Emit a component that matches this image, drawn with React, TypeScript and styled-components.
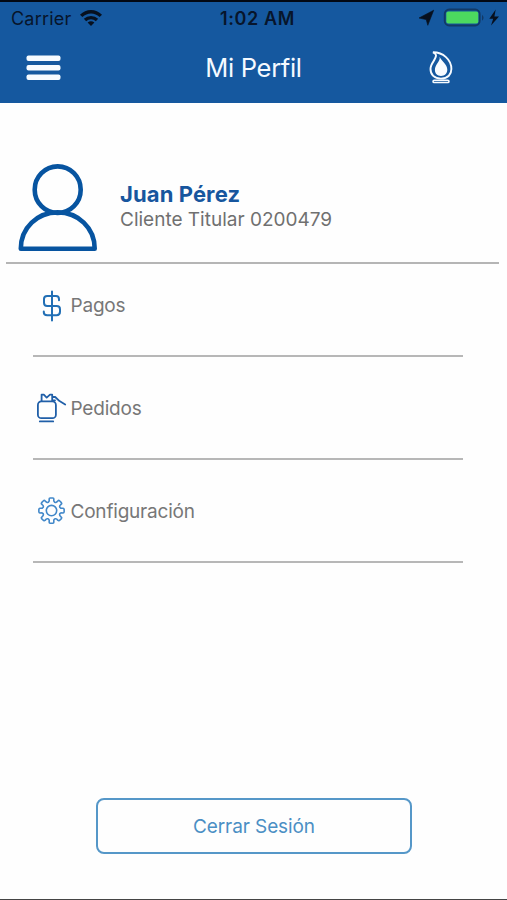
import React from "react";
import styled, { createGlobalStyle } from "styled-components";

const GlobalStyle = createGlobalStyle`
  * { box-sizing: border-box; }
  body { margin: 0; background: #fefefe; font-family: Inter, "Liberation Sans", sans-serif; }
  svg { display: block; flex: none; overflow: visible; }
`;

const Screen = styled.div`
  width: 507px;
  height: 900px;
  display: flex;
  flex-direction: column;
  background: #fefefe;
  border-bottom: 1px solid #444;
  overflow: hidden;
`;

const Header = styled.header`
  height: 102.5px;
  flex: none;
  background: #15589f;
  border-top: 2px solid #020814;
`;

const StatusBar = styled.div`
  height: 33px;
  display: grid;
  grid-template-columns: 1fr auto 1fr;
  align-items: center;
  padding: 0 8px 0 11px;
  color: #07152b;
`;

const StatusGroup = styled.div<{ $end?: boolean }>`
  display: flex;
  align-items: center;
  justify-content: ${(p) => (p.$end ? "flex-end" : "flex-start")};
`;

const Carrier = styled.span`
  width: 69px;
  padding-top: 1px;
  font-size: 18px;
  line-height: 22px;
  letter-spacing: 0.2px;
`;

const Clock = styled.time`
  font-size: 18px;
  font-weight: 600;
  line-height: 22px;
  letter-spacing: 0.6px;
  padding: 1px 0 0 5px;
`;

const NavBar = styled.nav`
  height: 65px;
  display: grid;
  grid-template-columns: 80px 1fr 80px;
  align-items: center;
  padding: 0 26px;
`;

const IconButton = styled.button<{ $end?: boolean }>`
  display: flex;
  justify-content: ${(p) => (p.$end ? "center" : "flex-start")};
  padding: 0;
  border: 0;
  background: none;
`;

const Title = styled.h1`
  margin: 0;
  text-align: center;
  color: #f5faff;
  font-size: 25.5px;
  font-weight: 400;
  line-height: 32px;
  letter-spacing: -0.3px;
`;

const Profile = styled.section`
  display: flex;
  align-items: flex-start;
  height: 161.5px;
  flex: none;
  margin: 0 8px 0 6px;
  padding: 62px 0 0 12px;
  border-bottom: 2px solid #b5b5b5;
`;

const ProfileText = styled.div`
  padding: 17.5px 0 0 22px;
`;

const Name = styled.h2`
  margin: 0;
  color: #17569e;
  font-size: 22px;
  font-weight: 700;
  line-height: 25px;
  letter-spacing: 0.1px;
`;

const Account = styled.p`
  margin: 0;
  color: #707070;
  font-size: 19px;
  line-height: 26px;
  white-space: nowrap;
`;

const Menu = styled.ul`
  list-style: none;
  margin: 0;
  padding: 0 44px 0 33px;
`;

const MenuItem = styled.li<{ $first?: boolean }>`
  height: ${(p) => (p.$first ? 93 : 102.75)}px;
  padding-top: ${(p) => (p.$first ? 24.5 : 34)}px;
  border-bottom: 2px solid #b7b7b7;
`;

const MenuLink = styled.div`
  display: flex;
  align-items: center;
  gap: 3.5px;
  height: 34px;
`;

const Label = styled.span`
  padding-top: 1.6px;
  color: #777;
  font-size: 19px;
  line-height: 24px;
  letter-spacing: -0.2px;
`;

const Logout = styled.button`
  width: 316px;
  height: 56px;
  margin: auto auto 45px 96px;
  padding: 1px 0 0;
  border: 2px solid #5597c8;
  border-radius: 8px;
  background: transparent;
  color: #4b8fc4;
  font: 400 19px/24px Inter, sans-serif;
  letter-spacing: -0.1px;
`;

const Wifi = () => (
  <svg width="22" height="16" viewBox="0 0 22 16" fill="none" stroke="#07101f" strokeWidth="3.4">
    <path d="M1.2 4.9C6.8-.7 15.2-.7 20.8 4.9M5 9C8.4 5.8 13.6 5.8 17 9" />
    <path d="M7.6 11.6Q11 8.9 14.4 11.6L11 15Z" fill="#07101f" stroke="none" />
  </svg>
);

const StatusIcons = () => (
  <svg width="80" height="20" viewBox="0 0 80 20">
    <path d="M14.7 1.2 8.8 16.3 7.2 10.6 0 9Z" fill="#07101f" stroke="#07101f" strokeWidth=".6" />
    <rect x="25.7" y=".5" width="35" height="16" rx="4.5" fill="none" stroke="#123966" strokeWidth="1.8" />
    <rect x="27.3" y="2.4" width="32" height="12.2" rx="2" fill="#4cd95f" />
    <path d="M63 5.8Q66.2 8.8 63 11.8Z" fill="#123966" />
    <path d="M76.7 .5 70.3 9.7H74.2L72 16.5 80 7.4H75.4Z" fill="#07101f" />
  </svg>
);

const MenuIcon = () => (
  <svg width="35" height="26" viewBox="0 0 35 26" fill="#f7fbff">
    <rect x=".5" y=".5" width="34" height="5.5" rx="2" />
    <rect x=".5" y="10" width="34" height="5.5" rx="2" />
    <rect x=".5" y="19.5" width="34" height="5.5" rx="2" />
  </svg>
);

const FlameIcon = () => (
  <svg width="24" height="33" viewBox="0 0 24 33" fill="none" stroke="#f7fbff">
    <path
      d="M4 1.3C14 1.2 22.4 8.8 22.4 18C22.4 23.2 19 27.6 12 27.6C5.2 27.6 1.5 23.5 1.5 18C1.5 12 7.4 8.5 7 4.2C6.8 2.8 5.6 2 4 1.3Z"
      strokeWidth="1.9"
    />
    <path
      d="M10.6 5.7C11.6 10.5 5.9 13.3 5.9 18.8C5.9 22.7 8.3 25 12 25C15.8 25 18.3 22.5 18.3 18.6C18.3 13.2 12.8 10.5 10.6 5.7Z"
      fill="#f7fbff"
      stroke="none"
    />
    <rect x="4" y="29.2" width="16" height="2.4" rx="1.2" strokeWidth="1.5" />
  </svg>
);

const AvatarIcon = () => (
  <svg width="80" height="88" viewBox="0 0 80 88" fill="none" stroke="#0754a0" strokeWidth="4.6" strokeLinejoin="round">
    <ellipse cx="39.7" cy="24.7" rx="23" ry="23.3" />
    <path d="M2.8 83.8C2.8 62.6 19.5 47.4 39.7 47.4S76.7 62.6 76.7 83.8Z" />
  </svg>
);

const DollarIcon = () => (
  <svg width="34" height="34" viewBox="0 0 34 34" fill="none" stroke="#226fb5" strokeWidth="2" strokeLinecap="round">
    <path d="M19 2.5V31.5M26 11.2V10.3Q26 7 23 7H14.2Q11 7 11 10V13.8Q11 17 14.2 17H23.6Q27 17 27 20.2V22.8Q27 26.2 23.6 26.2H14.2Q10.8 26.2 10.8 23.2V22.5" />
  </svg>
);

const TankIcon = () => (
  <svg width="34" height="34" viewBox="0 0 34 34" fill="none" stroke="#205fa8" strokeWidth="1.8" strokeLinecap="round" strokeLinejoin="round">
    <rect x="4.9" y="10.4" width="18" height="16.8" rx="3.5" />
    <path d="M8.6 10V3.6H10.8L13.7 6.6 17 3.6H19.2V10M19.5 6H22.2L26.5 10.1 32.2 13.5M19.6 9.3H22M6.8 30.4H20.2" />
  </svg>
);

const gearPath = Array.from({ length: 8 }, (_, i) => {
  const point = (radius: number, degrees: number) => {
    const angle = ((i * 45 + degrees - 90) * Math.PI) / 180;
    return `${(18.5 + radius * Math.cos(angle)).toFixed(2)} ${(16.6 + radius * Math.sin(angle)).toFixed(2)}`;
  };
  return [
    `${i ? "L" : "M"}${point(9.3, -17)}`,
    `Q${point(9.6, -13)} ${point(10.7, -12.5)}`,
    `L${point(11.7, -11.5)}`,
    `Q${point(12.7, -11)} ${point(12.7, -6)}`,
    `L${point(12.7, 6)}`,
    `Q${point(12.7, 11)} ${point(11.7, 11.5)}`,
    `L${point(10.7, 12.5)}`,
    `Q${point(9.6, 13)} ${point(9.3, 17)}`,
    `Q${point(8.5, 22.5)} ${point(9.3, 28)}`,
  ].join("");
}).join("");

const GearIcon = () => (
  <svg width="34" height="34" viewBox="0 0 34 34" fill="none" stroke="#4288c9" strokeWidth="1.6" strokeLinejoin="round">
    <path d={`${gearPath}Z`} />
    <circle cx="18.5" cy="16.6" r="5.2" />
  </svg>
);

const items = [
  { label: "Pagos", Icon: DollarIcon },
  { label: "Pedidos", Icon: TankIcon },
  { label: "Configuración", Icon: GearIcon },
];

export default function App() {
  return (
    <Screen>
      <GlobalStyle />
      <Header>
        <StatusBar>
          <StatusGroup>
            <Carrier>Carrier</Carrier>
            <Wifi />
          </StatusGroup>
          <Clock>1:02 AM</Clock>
          <StatusGroup $end>
            <StatusIcons />
          </StatusGroup>
        </StatusBar>
        <NavBar>
          <IconButton aria-label="Menú">
            <MenuIcon />
          </IconButton>
          <Title>Mi Perfil</Title>
          <IconButton $end aria-label="Gas">
            <FlameIcon />
          </IconButton>
        </NavBar>
      </Header>
      <Profile>
        <AvatarIcon />
        <ProfileText>
          <Name>Juan Pérez</Name>
          <Account>Cliente Titular 0200479</Account>
        </ProfileText>
      </Profile>
      <Menu>
        {items.map(({ label, Icon }, index) => (
          <MenuItem key={label} $first={index === 0}>
            <MenuLink>
              <Icon />
              <Label>{label}</Label>
            </MenuLink>
          </MenuItem>
        ))}
      </Menu>
      <Logout>Cerrar Sesión</Logout>
    </Screen>
  );
}
